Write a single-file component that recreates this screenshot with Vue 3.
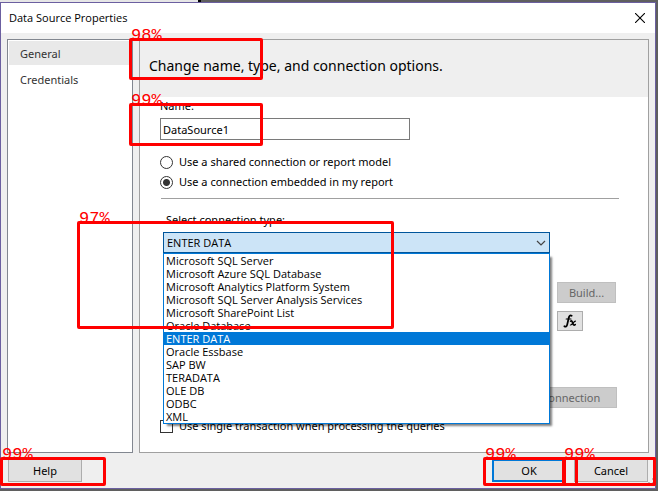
<script setup>
import { ref } from 'vue'

const name = ref('DataSource1')
const mode = ref('embedded')
const single = ref(false)
const type = ref('ENTER DATA')
const types = [
  'Microsoft SQL Server',
  'Microsoft Azure SQL Database',
  'Microsoft Analytics Platform System',
  'Microsoft SQL Server Analysis Services',
  'Microsoft SharePoint List',
  'Oracle Database',
  'ENTER DATA',
  'Oracle Essbase',
  'SAP BW',
  'TERADATA',
  'OLE DB',
  'ODBC',
  'XML',
]

// Detected regions with their confidence, in canvas coordinates.
const marks = [
  { score: '98%', x: 129, y: 38, w: 134, h: 42 },
  { score: '99%', x: 129, y: 103, w: 134, h: 43 },
  { score: '97%', x: 77, y: 221, w: 317, h: 108 },
  { score: '99%', x: 0, y: 457, w: 106, h: 29 },
  { score: '99%', x: 483, y: 457, w: 83, h: 29 },
  { score: '99%', x: 562, y: 457, w: 94, h: 29 },
  { score: '', x: 575, y: 457, w: 81, h: 29 },
]
const place = (m) => ({ left: m.x + 'px', top: m.y + 'px', width: m.w + 'px', height: m.h + 'px' })
</script>

<template>
  <div class="desktop">
    <div class="behind"></div>
    <section class="dialog" role="dialog" aria-labelledby="dialog-title">
      <header class="titlebar">
        <h1 id="dialog-title">Data Source Properties</h1>
        <button class="close" type="button" aria-label="Close">
          <svg width="10" height="10" viewBox="0 0 10 10"><path d="M0 0L10 10M10 0L0 10" stroke="#000" stroke-width="1.1" /></svg>
        </button>
      </header>

      <div class="body">
        <nav class="side">
          <a href="#general" class="tab active">General</a>
          <a href="#credentials" class="tab">Credentials</a>
        </nav>

        <main class="panel">
          <h2>Change name, type, and connection options.</h2>
          <form class="form" @submit.prevent>
            <label class="name-label" for="name">Name:</label>
            <input id="name" v-model="name" class="name" type="text" />

            <label class="choice"><input v-model="mode" type="radio" name="mode" value="shared" />Use a shared connection or report model</label>
            <label class="choice"><input v-model="mode" type="radio" name="mode" value="embedded" />Use a connection embedded in my report</label>

            <hr />

            <label class="type-label" for="type">Select connection type:</label>
            <div class="combo">
              <select id="type" v-model="type">
                <option v-for="t in types" :key="t">{{ t }}</option>
              </select>
              <svg class="chevron" width="10" height="6" viewBox="0 0 10 6"><path d="M1 1L5 5L9 1" fill="none" stroke="#444" stroke-width="1.2" /></svg>
              <ul class="list" role="listbox" aria-label="Connection types">
                <li v-for="t in types" :key="t" role="option" :aria-selected="t === type" :class="{ selected: t === type }" @click="type = t">{{ t }}</li>
              </ul>
            </div>

            <div class="tools">
              <button class="btn build" type="button" disabled>Build...</button>
              <button class="btn fx" type="button" aria-label="Expression">
                <svg width="14" height="14" viewBox="0 0 14 14" fill="none" stroke="#000" stroke-linecap="round">
                  <path d="M8.6 1.7C7 .6 6.1 2.2 5.7 4L4.2 10.6C3.8 12.4 2.6 13.1 1.4 12.2" stroke-width="1.8" />
                  <path d="M3.2 5H8" stroke-width="1.2" />
                  <path d="M7.6 7.2C9 6.4 9.3 7.8 9.7 9C10.1 10.8 10.9 11.6 12.2 10.6" stroke-width="1.7" />
                  <path d="M12.4 7.2C10.8 7 9.4 11.4 7.4 11" stroke-width="1.2" />
                </svg>
              </button>
            </div>

            <button class="btn test" type="button" disabled>Test Connection</button>
            <label class="choice"><input v-model="single" type="checkbox" />Use single transaction when processing the queries</label>
          </form>
        </main>
      </div>

      <footer class="footer">
        <button class="btn action" type="button">Help</button>
        <span class="spring"></span>
        <button class="btn action primary" type="button">OK</button>
        <button class="btn action" type="button">Cancel</button>
        <svg class="grip" width="6" height="6" viewBox="0 0 6 6" fill="#bbb"><path d="M4 0h2v2H4zM0 4h2v2H0zM4 4h2v2H4z" /></svg>
      </footer>
    </section>

    <div v-for="(m, i) in marks" :key="i" class="mark" :style="place(m)">
      <span v-if="m.score">{{ m.score }}</span>
    </div>
  </div>
</template>

<style>
body {
  margin: 0;
}
</style>

<style scoped>
* {
  box-sizing: border-box;
}
.desktop {
  position: relative;
  display: flex;
  flex-direction: column;
  min-height: 100vh;
  padding: 0 2px 2px 0;
  overflow: hidden;
  background: #5f5f5f;
  color: #000;
  font: 11px/14px 'Noto Sans', sans-serif;
}
.behind {
  width: 201px;
  height: 2px;
  background: #e6e6e6;
  border-right: 3px solid #000;
}
.dialog {
  flex: 1;
  display: flex;
  flex-direction: column;
  background: #efefef;
  border: 1px solid #6b5fa0;
}
.titlebar {
  display: flex;
  align-items: center;
  justify-content: space-between;
  height: 30px;
  padding: 0 10px 0 8px;
  background: #fff;
}
h1 {
  margin: 0;
  font: 11px/16px 'Open Sans', sans-serif;
}
.close {
  display: flex;
  padding: 0;
  border: 0;
  background: none;
}
.body {
  flex: 1;
  display: flex;
  gap: 6px;
  padding: 6px 6px 0;
}
.side {
  width: 126px;
  padding: 1px;
  border: 1px solid #828790;
  background: #fff;
}
.tab {
  display: flex;
  align-items: center;
  height: 24px;
  margin-bottom: 2px;
  padding: 2px 0 0 11px;
  color: #333;
  text-decoration: none;
}
.tab.active {
  background: #e9e9e9;
}
.panel {
  flex: 1;
  border: 1px solid #a0a0a0;
  background: #fff;
}
h2 {
  margin: 0;
  padding: 14px 9px 20px;
  background: #efefef;
  font: 14px/23px 'Noto Sans', sans-serif;
}
.form {
  display: flex;
  flex-direction: column;
  align-items: flex-start;
  padding: 2px 29px 12px 20px;
}
.name-label {
  margin-bottom: 5px;
}
.name {
  width: 250px;
  height: 22px;
  margin-bottom: 12px;
  padding: 0 2px;
  border: 1px solid #7a7a7a;
  font: inherit;
}
.choice {
  display: flex;
  align-items: center;
  gap: 6px;
  height: 20px;
}
.choice input {
  appearance: none;
  width: 13px;
  height: 13px;
  margin: 0;
  border: 1px solid #333;
  background: #fff;
}
.choice input[type='radio'] {
  border-radius: 50%;
}
.choice input[type='radio']:checked {
  background: radial-gradient(circle, #333 3px, #fff 4px);
}
hr {
  align-self: stretch;
  margin: 6px 0 14px 1px;
  border: 0;
  border-top: 1px solid #a0a0a0;
}
.type-label {
  margin: 0 0 5px 6px;
}
.combo {
  position: relative;
  align-self: stretch;
  margin: 0 69px 0 3px;
  font: 11px/13px 'Open Sans', sans-serif;
}
select {
  display: block;
  appearance: none;
  width: 100%;
  height: 21px;
  padding: 0 3px;
  border: 1px solid #00559b;
  border-radius: 0;
  background: #cce4f7;
  color: #000;
  font: inherit;
}
.chevron {
  position: absolute;
  top: 8px;
  right: 4px;
  pointer-events: none;
}
.list {
  position: absolute;
  z-index: 1;
  top: 21px;
  left: 0;
  right: 0;
  margin: 0;
  padding: 0;
  border: 1px solid #0078d7;
  background: #fff;
  box-shadow: 3px 3px 2px -1px rgba(0, 0, 0, 0.5);
  list-style: none;
}
.list li {
  height: 13px;
  padding-left: 2px;
}
.list .selected {
  background: #0078d7;
  color: #fff;
}
.btn {
  padding: 0;
  border: 1px solid #adadad;
  background: #e1e1e1;
  color: #000;
  font: inherit;
}
.btn:disabled {
  border-color: #bfbfbf;
  background: #ccc;
  color: #666;
}
.tools {
  align-self: flex-end;
  display: flex;
  flex-direction: column;
  gap: 8px;
  width: 62px;
  margin: 29px 0 56px;
}
.build {
  width: 59px;
  height: 21px;
}
.fx {
  display: flex;
  align-items: center;
  justify-content: center;
  width: 26px;
  height: 20px;
}
.test {
  align-self: flex-end;
  width: 116px;
  height: 21px;
  margin: 0 2px 8px 0;
}
.footer {
  position: relative;
  display: flex;
  gap: 8px;
  padding: 6px 7px;
}
.spring {
  flex: 1;
}
.action {
  width: 74px;
  height: 23px;
}
.primary {
  border: 2px solid #0078d7;
}
.grip {
  position: absolute;
  right: 1px;
  bottom: 4px;
}
.mark {
  position: absolute;
  z-index: 2;
  border: 3px solid #f00;
  border-radius: 2px;
  pointer-events: none;
}
.mark span {
  position: absolute;
  left: -1px;
  bottom: 100%;
  color: #f00;
  font: 17px/10px 'Liberation Mono', monospace;
}
</style>
